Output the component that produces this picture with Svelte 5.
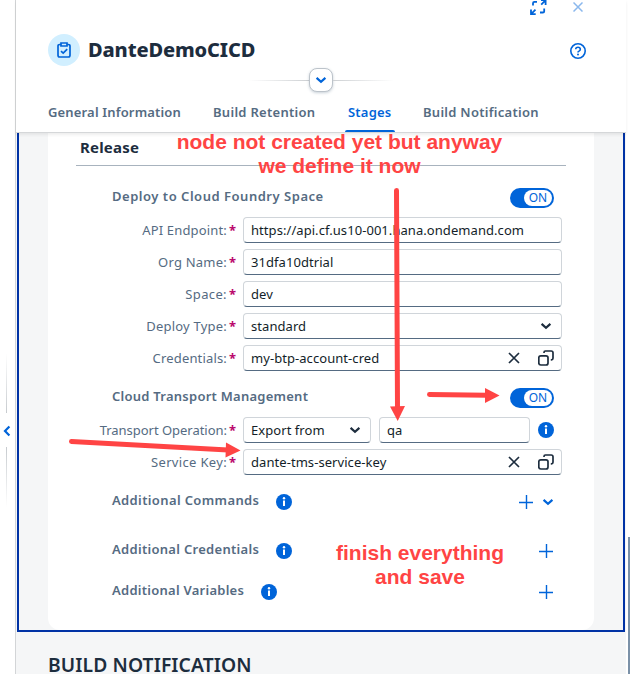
<script>
  const tabs = [
    { name: 'General Information', left: 0, width: 133, track: 0.16 },
    { name: 'Build Retention', left: 32, width: 103, track: 0.28 },
    { name: 'Stages', left: 32, width: 44, track: 0.2, active: true },
    { name: 'Build Notification', left: 31, width: 116, track: 0.27 }
  ];
  const fields = [
    { label: 'API Endpoint', value: 'https://api.cf.us10-001.hana.ondemand.com', track: 0.16 },
    { label: 'Org Name', value: '31dfa10dtrial', track: 0.22 },
    { label: 'Space', value: 'dev', track: 0.35 },
    { label: 'Deploy Type', value: 'standard', track: 0.2, kind: 'select' },
    { label: 'Credentials', value: 'my-btp-account-cred', track: 0.16, kind: 'help' }
  ];
  const extras = [
    { name: 'Additional Commands', track: 0.37, menu: true },
    { name: 'Additional Credentials', track: 0.3 },
    { name: 'Additional Variables', track: 0.26 }
  ];
</script>

{#snippet chevron()}
  <svg class="chevron" width="12" height="8" viewBox="0 0 12 8"><path d="M1.6 1.9 6 5.8l4.4-3.9" /></svg>
{/snippet}
{#snippet info()}
  <svg class="info" width="16" height="16" viewBox="0 0 16 16"><circle cx="8" cy="8" r="8" /><path d="M8 6.400V12" /><circle class="dot" cx="8" cy="4.200" r="1.200" /></svg>
{/snippet}
{#snippet plus()}
  <svg class="plus" width="14" height="14" viewBox="0 0 14 14"><path d="M7.500 0v14M0 7.500h14" /></svg>
{/snippet}
{#snippet valueHelp()}
  <span class="tools">
    <svg width="12" height="12" viewBox="0 0 12 12"><path d="m1 1 10 10M11 1 1 11" /></svg>
    <svg width="16" height="16" viewBox="0 0 16 16"><rect x=".8" y="5.8" width="9.2" height="9.2" rx="2" /><path d="M6 3V2.4Q6 1 7.4 1h5.8Q15 1 15 2.8v5.4Q15 9.8 13.4 9.8h-.6" /></svg>
  </span>
{/snippet}
{#snippet toggle()}
  <span class="switch"><b>ON</b></span>
{/snippet}

<div class="screen">
  <aside>
    <i class="rail up"></i>
    <svg width="8" height="12" viewBox="0 0 8 12"><path d="M6.4 1.5 2 6l4.4 4.5" /></svg>
    <i class="rail down"></i>
  </aside>
  <main>
    <header>
      <div class="window-tools">
        <svg width="18" height="18" viewBox="0 0 18 18"><path d="M4 7.500V5.200Q4 3.800 5.400 3.800H8M15.200 10.500v2.700q0 1.300-1.300 1.300H11M12 2.200h4.600V7M16.600 2.200 12.200 6.600M2 11.500V16.200h4.700M2 16.200l4.500-4.500" /></svg>
        <svg class="close" width="10" height="10" viewBox="0 0 10 10"><path d="m.5.5 9 9M9.5.5l-9 9" /></svg>
      </div>
      <div class="title">
        <span class="avatar"><svg width="14" height="16" viewBox="0 0 14 16"><path d="M4 2.5H2.8Q1 2.5 1 4v9.3Q1 15 2.7 15h8.6q1.7 0 1.7-1.7V4q0-1.5-1.8-1.5H10M4 1h6v3H4ZM4 9.2l2.2 2 4-4" /></svg></span>
        <h1>DanteDemoCICD</h1>
        <svg class="question" width="16" height="16" viewBox="0 0 16 16"><circle cx="8" cy="8" r="7.2" /><path d="M5.7 6.2Q5.8 4.2 8 4.2t2.3 2Q10.3 7.4 9 8.1q-1 .5-1 1.3" /><circle class="dot" cx="8" cy="11.6" r="1" /></svg>
      </div>
      <div class="expander"><i></i><button aria-label="Expand header">{@render chevron()}</button><i class="right"></i></div>
      <nav>
        {#each tabs as tab}
          <span class:active={tab.active} style:margin-left="{tab.left}px" style:width="{tab.width}px" style:letter-spacing="{tab.track}px">{tab.name}</span>
        {/each}
      </nav>
    </header>

    <section class="stage">
      <div class="card">
        <h2>Release</h2>
        <div class="heading deploy"><h3>Deploy to Cloud Foundry Space</h3>{@render toggle()}</div>
        <div class="form">
          {#each fields as field}
            <div class="row">
              <label style:letter-spacing="{field.track}px">{field.label}:<em>*</em></label>
              <div class="input">
                <span>{field.value}</span>
                {#if field.kind === 'select'}{@render chevron()}{/if}
                {#if field.kind === 'help'}{@render valueHelp()}{/if}
              </div>
            </div>
          {/each}
        </div>
        <div class="heading transport"><h3>Cloud Transport Management</h3>{@render toggle()}</div>
        <div class="form">
          <div class="row">
            <label class="tight">Transport Operation:<em>*</em></label>
            <div class="input operation"><span>Export from</span>{@render chevron()}</div>
            <div class="input node"><span>qa</span></div>
            {@render info()}
          </div>
          <div class="row">
            <label class="wide">Service Key:<em>*</em></label>
            <div class="input"><span>dante-tms-service-key</span>{@render valueHelp()}</div>
          </div>
        </div>
        <div class="extras">
          {#each extras as extra}
            <div class="extra" class:first={extra.menu}>
              <h3 style:letter-spacing="{extra.track}px">{extra.name}</h3>{@render info()}
              <span class="actions">{@render plus()}{#if extra.menu}{@render chevron()}{/if}</span>
            </div>
          {/each}
        </div>
      </div>
    </section>
    <h2 class="next">BUILD NOTIFICATION</h2>
  </main>
  <i class="scrollbar"></i>

  <div class="note define"><span>node not created yet but anyway</span><br />we define it now</div>
  <div class="note finish">finish everything<br />and save</div>
  <svg class="arrows" width="630" height="674" viewBox="0 0 630 674">
    <path d="M396.5 190.500 397.500 408M429.500 394.500 487 395.200M71.500 441.500 228 450" />
    <polygon points="390,406.500 405,406 397.700,421" /><polygon points="485,388 499.500,395.500 485,403" /><polygon points="226,442.500 240.500,450.500 225.500,457.500" />
  </svg>
</div>

<style>
  :global(body) { margin: 0; background: #fff; }
  * { box-sizing: border-box; }
  svg { fill: none; stroke: #0064d9; stroke-width: 1.7; flex: none; display: block; }
  h1, h2, h3 { margin: 0; white-space: nowrap; }
  .screen { position: relative; display: flex; width: 630px; height: 674px; overflow: hidden; background: #fff; font-family: "Noto Sans", sans-serif; font-size: 13px; color: #1d2d3e; }
  aside { width: 15px; padding: 353px 0 0 3px; flex: none; }
  aside svg { margin: 12px 0 10px; stroke-width: 2.2; }
  .rail { display: block; width: 1px; height: 60px; margin-left: 3px; background: linear-gradient(transparent, #c7cbcf); }
  .rail.down { background: linear-gradient(#c7cbcf, transparent); }
  main { width: 611px; height: 674px; border-left: 1px solid #d3d5d7; background: #f5f6f7; flex: none; }
  header { position: relative; z-index: 1; height: 133px; background: #fff; border-bottom: 1px solid #d5d7d9; box-shadow: 0 2px 3px #00000012; }
  .window-tools { display: flex; height: 27px; padding-left: 513px; gap: 26px; }
  .window-tools svg { margin-top: -2px; stroke-width: 1.8; }
  .window-tools .close { margin-top: 2px; opacity: .45; stroke-width: 1.5; }
  .title { display: flex; align-items: center; height: 46px; padding-left: 32px; }
  .avatar { display: grid; place-items: center; width: 32px; height: 32px; border-radius: 50%; background: #d1efff; }
  h1 { width: 482px; margin-left: 8px; font: 800 20px/28px "Noto Sans", sans-serif; letter-spacing: -.13px; }
  .question { stroke-width: 1.6; margin-top: 2px; }
  .question .dot { fill: #0064d9; stroke: none; }
  .expander { display: flex; align-items: center; justify-content: center; height: 14px; width: 610px; }
  .expander i { width: 61px; height: 1px; background: linear-gradient(90deg, transparent, #cdd0d3); }
  .expander i.right { background: linear-gradient(90deg, #cdd0d3, transparent); }
  .expander button { display: grid; place-items: center; width: 24px; height: 24px; flex: none; padding: 0; border: 1px solid #bcc3ca; border-radius: 8px; background: #fff; box-shadow: 0 1px 3px #5b738b55; }
  nav { display: flex; height: 45px; padding: 15px 0 0 32px; }
  nav span { position: relative; font-weight: 600; line-height: 20px; color: #556b82; white-space: nowrap; }
  nav .active { color: #0064d9; }
  nav .active::after { content: ""; position: absolute; left: -3px; right: -3px; bottom: 0; height: 2px; background: #0064d9; border-radius: 2px 2px 0 0; }
  .stage { width: 608px; height: 499px; margin-left: 1px; padding: 0 29px; border: 2px solid #0032a5; border-top: 0; }
  .card { height: 497px; background: #fff; border-radius: 0 0 12px 12px; }
  .card h2 { height: 33px; margin: 0 28px; padding-left: 4px; border-bottom: 1px solid #a8b3be; font-size: 15px; line-height: 29px; letter-spacing: .2px; }
  .heading { display: flex; align-items: center; justify-content: space-between; height: 20px; padding: 0 40px 0 64px; }
  .heading.deploy { margin-top: 22px; }
  .heading.transport { margin-top: 17px; }
  h3 { font-size: 13px; font-weight: 600; line-height: 18px; color: #556b82; }
  .heading h3 { margin-top: -5px; }
  .deploy h3 { letter-spacing: .52px; }
  .transport h3 { letter-spacing: .25px; }
  .switch { display: flex; justify-content: flex-end; width: 44px; height: 20px; padding: 2px; border-radius: 10px; background: #0064d9; }
  .switch b { width: 28px; height: 16px; border-radius: 8px; background: #fff; color: #0064d9; font-weight: 400; font-size: 12px; line-height: 16px; text-align: center; }
  .form { display: flex; flex-direction: column; gap: 6px; margin-top: 9px; }
  .row { display: flex; align-items: center; height: 26px; }
  label { width: 188px; margin-right: 7px; text-align: right; color: #556b82; white-space: nowrap; }
  label.tight { letter-spacing: -.03px; }
  label.wide { letter-spacing: .33px; }
  label em { margin-left: 2px; color: #ba066c; font-style: normal; font-weight: 700; letter-spacing: 0; }
  .input { display: flex; align-items: center; width: 319px; height: 26px; padding: 0 8px 0 7px; border: 1px solid #d0d5da; border-bottom-color: #556b82; border-radius: 4px; white-space: nowrap; line-height: 18px; color: #131e29; letter-spacing: .06px; }
  .input > span:first-child { flex: 1; }
  .input svg { stroke: #1d2d3e; }
  .input > .chevron { stroke-width: 2.2; margin-right: 1px; }
  .input.operation { width: 128px; }
  .input.node { width: 151px; margin: 0 8px; }
  .tools { display: flex; align-items: center; gap: 18px; margin-right: -1px; }
  .info circle { fill: #0064d9; stroke: none; }
  .info path { stroke: #fff; stroke-width: 2; }
  .info .dot { fill: #fff; }
  .chevron { stroke-width: 2.2; }
  .plus { stroke-width: 1.4; }
  .extras { margin-top: 14px; }
  .extra { display: flex; align-items: center; height: 25px; margin: 0 40px 16px 64px; }
  .extra.first { margin-bottom: 24px; }
  .extra h3 { margin: -4px 17px 0 0; }
  .extra .actions { display: flex; align-items: center; gap: 9px; margin-left: auto; margin-right: 1px; }
  .extra.first .actions { margin-right: 0; }
  .next { margin: 24px 0 0 32px; font-size: 19.300px; line-height: 18px; font-weight: 600; letter-spacing: .1px; }
  .scrollbar { position: absolute; right: 0; top: 537px; width: 2px; height: 137px; background: #7b91a8; }
  .note { position: absolute; z-index: 2; color: #ff4444; font: 700 21px/24px "Liberation Sans", Arial, sans-serif; text-align: center; white-space: nowrap; }
  .define { left: 169.500px; top: 130px; width: 340px; }
  .finish { left: 320px; top: 541px; width: 200px; }
  .arrows { position: absolute; z-index: 3; left: 0; top: 0; pointer-events: none; }
  .arrows path { stroke: #ff4444; stroke-width: 5; stroke-linecap: round; }
  .arrows polygon { fill: #ff4444; stroke: none; }
</style>
